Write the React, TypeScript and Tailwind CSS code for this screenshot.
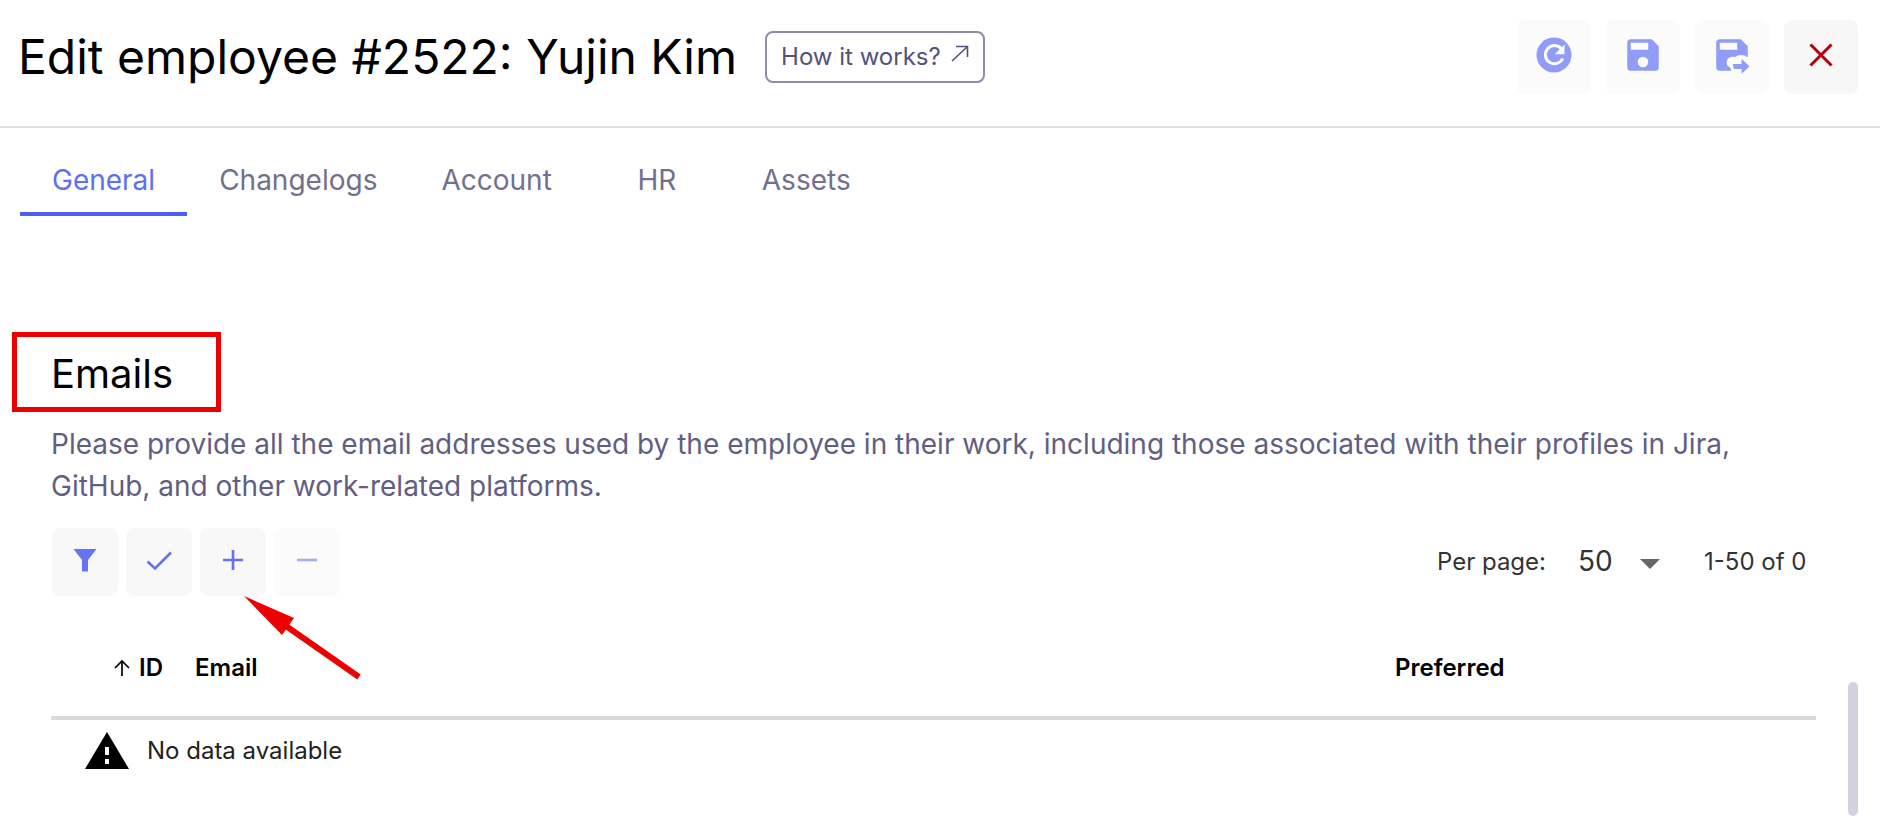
import { useState } from 'react';
import type { ReactNode } from 'react';

const TABS = ['General', 'Changelogs', 'Account', 'HR', 'Assets'];

function HeaderButton({ label, muted, children }: { label: string; muted?: boolean; children: ReactNode }) {
  return (
    <button
      type="button"
      aria-label={label}
      className={`flex size-[74px] items-center justify-center rounded-lg ${
        muted ? 'bg-[#fbfbfb] text-[#919cf6]' : 'bg-[#f7f7f7] text-[#b5000b]'
      }`}
    >
      {children}
    </button>
  );
}

function ToolButton({ label, muted, children }: { label: string; muted?: boolean; children: ReactNode }) {
  return (
    <button
      type="button"
      aria-label={label}
      className={`flex h-[68px] w-[66px] items-center justify-center rounded-lg ${
        muted ? 'bg-[#fbfbfb] text-[#a3acf8]' : 'bg-[#f8f8f8] text-[#6474f3]'
      }`}
    >
      {children}
    </button>
  );
}

export default function App() {
  const [tab, setTab] = useState('General');
  const [perPage, setPerPage] = useState('50');

  return (
    <div className="relative min-h-screen bg-white font-['Inter',sans-serif] text-black">
      <header className="flex items-start justify-between border-b-2 border-[#e0e0e0] pt-5 pr-[22px] pb-8 pl-[18px]">
        <div className="flex h-[74px] items-center gap-7">
          <h1 className="text-5xl">Edit employee #2522: Yujin Kim</h1>
          <a
            href="#how-it-works"
            className="flex h-[52px] items-center gap-[10px] rounded-lg border-2 border-[#8f8ba8] px-[14px] text-2xl text-[#55517a]"
          >
            How it works?
            <svg className="mb-2 size-[18px]" viewBox="0 0 18 18" fill="none" stroke="currentColor" strokeWidth="1.6">
              <path d="M1 17 16 3M5 2.5h11.5V13" />
            </svg>
          </a>
        </div>
        <div className="flex gap-[15px]">
          <HeaderButton label="Refresh" muted>
            <svg className="mb-1 size-[42px]" viewBox="0 0 24 24">
              <circle cx="12" cy="12" r="10" fill="currentColor" />
              <path d="M16.2 8.4A5.2 5.2 0 1 0 17 14" fill="none" stroke="#fbfbfb" strokeWidth="1.7" />
              <path d="M18 6v5.5h-5.5z" fill="#fbfbfb" />
            </svg>
          </HeaderButton>
          <HeaderButton label="Save" muted>
            <svg className="mb-1 size-[42px]" viewBox="0 0 24 24" fill="currentColor">
              <path d="M15 9H5V5h10m-3 14a3 3 0 0 1-3-3 3 3 0 0 1 3-3 3 3 0 0 1 3 3 3 3 0 0 1-3 3m5-16H5a2 2 0 0 0-2 2v14a2 2 0 0 0 2 2h14a2 2 0 0 0 2-2V7l-4-4z" />
            </svg>
          </HeaderButton>
          <HeaderButton label="Save and close" muted>
            <svg className="mb-1 size-[42px]" viewBox="0 0 24 24" fill="currentColor">
              <path d="M17 3H5a2 2 0 0 0-2 2v14a2 2 0 0 0 2 2h6.8a6.5 6.5 0 0 1-.8-1.9A3 3 0 0 1 9 16a3 3 0 0 1 3-3c.8 0 1.1 0 1.6.3A6 6 0 0 1 21 13.3V7l-4-4zm-2 6H5V5h10v4z" />
              <path d="M12.500 17.2h5v-3L22 18.5l-4.500 4.200v-2.700h-4.500z" />
            </svg>
          </HeaderButton>
          <HeaderButton label="Close">
            <svg className="mb-1 size-6" viewBox="0 0 24 24" fill="none" stroke="currentColor" strokeWidth="3">
              <path d="m1.5 1.5 21 21m0-21-21 21" />
            </svg>
          </HeaderButton>
        </div>
      </header>

      <nav className="flex px-5">
        {TABS.map((name) => (
          <button
            key={name}
            type="button"
            onClick={() => setTab(name)}
            className={`h-[88px] min-w-[146px] border-b-4 px-8 pt-5 text-[28px] ${
              tab === name ? 'border-[#4a5ff0] text-[#5d6ff5]' : 'border-transparent text-[#736f90]'
            }`}
          >
            {name}
          </button>
        ))}
      </nav>

      <main className="pt-[116px] pr-16 pl-[51px]">
        <div className="relative w-fit">
          <h2 className="pt-1 text-[40px] leading-[76px]">Emails</h2>
          <div className="absolute inset-y-0 -right-12 -left-[39px] border-[5px] border-[#ec0000]" />
        </div>
        <p className="mt-[11px] text-[28px] leading-[42px] text-[#625e83]">
          Please provide all the email addresses used by the employee in their work, including those associated with
          their profiles in Jira, GitHub, and other work-related platforms.
        </p>

        <div className="mt-[21px] flex items-center justify-between pl-px">
          <div className="relative flex gap-2">
            <ToolButton label="Filter">
              <svg className="mb-1 size-6" viewBox="0 0 24 24" fill="currentColor">
                <path d="M.5 1h23L15 12v11.5H9V12z" />
              </svg>
            </ToolButton>
            <ToolButton label="Apply">
              <svg className="size-7" viewBox="0 0 28 28" fill="none" stroke="currentColor" strokeWidth="2.6">
                <path d="m2.5 13.5 7.500 7L26 4.5" />
              </svg>
            </ToolButton>
            <ToolButton label="Add">
              <svg className="mb-1 size-6" viewBox="0 0 24 24" fill="none" stroke="currentColor" strokeWidth="2.6">
                <path d="M2 12h20M12 2v20" />
              </svg>
            </ToolButton>
            <ToolButton label="Remove" muted>
              <svg className="mb-1 size-6" viewBox="0 0 24 24" fill="none" stroke="currentColor" strokeWidth="2.6">
                <path d="M2 12h20" />
              </svg>
            </ToolButton>
            {/* callout arrow pointing at the add button */}
            <svg className="absolute top-[68px] left-[192px] h-[84px] w-[118px]" viewBox="0 0 118 84">
              <path d="M42 30 115 81" stroke="#ec0000" strokeWidth="6" />
              <path d="M0 0 50 22 38 39z" fill="#ec0000" />
            </svg>
          </div>

          <div className="flex items-center text-2xl text-[#333]">
            <label htmlFor="per-page">Per page:</label>
            <div className="relative ml-8">
              <select
                id="per-page"
                value={perPage}
                onChange={(e) => setPerPage(e.target.value)}
                className="w-[82px] appearance-none bg-transparent text-[28px]"
              >
                <option value="50">50</option>
                <option value="100">100</option>
              </select>
              <svg className="pointer-events-none absolute top-4 right-0 h-[10px] w-5" viewBox="0 0 20 10">
                <path d="M0 0h20L10 10z" fill="#666" />
              </svg>
            </div>
            <span className="ml-11 min-w-28">1-50 of 0</span>
          </div>
        </div>

        <table className="mt-4 w-full table-fixed text-left text-2xl">
          <thead>
            <tr className="h-[106px] border-b-4 border-[#dadada]">
              <th className="w-[144px] pt-2 pl-[62px] font-semibold">
                <span className="flex items-center gap-2">
                  <svg className="size-[18px]" viewBox="0 0 18 18" fill="none" stroke="currentColor" strokeWidth="1.7">
                    <path d="M9 17V2M2 9l7-7 7 7" />
                  </svg>
                  ID
                </span>
              </th>
              <th className="pt-2 font-semibold">Email</th>
              <th className="w-[421px] pt-2 font-semibold">Preferred</th>
            </tr>
          </thead>
          <tbody>
            <tr>
              <td colSpan={3} className="h-16 pl-[34px] text-[#222]">
                <span className="flex items-center gap-[18px]">
                  <svg className="size-11" viewBox="0 0 44 44">
                    <path d="M22 3 44 40H0z" fill="#000" />
                    <path d="M20 18h4v8h-4zM20 30h4v5h-4z" fill="#fff" />
                  </svg>
                  No data available
                </span>
              </td>
            </tr>
          </tbody>
        </table>
      </main>

      <div className="absolute right-[22px] bottom-5 h-[134px] w-[10px] rounded-full bg-[#d3d1dd]" />
    </div>
  );
}
